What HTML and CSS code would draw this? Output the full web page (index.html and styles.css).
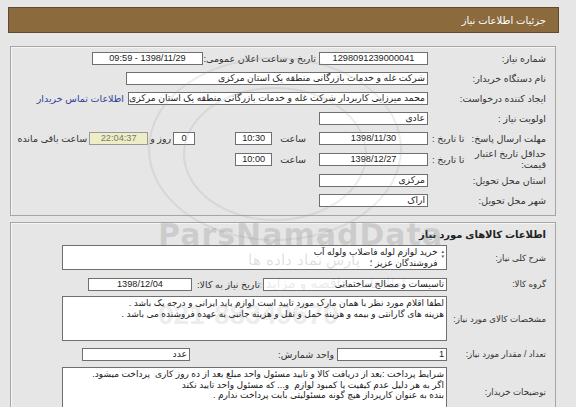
FILE: index.html
```html
<!DOCTYPE html>
<html lang="fa">
<head>
<meta charset="utf-8">
<title>جزئیات اطلاعات نیاز</title>
<link rel="stylesheet" href="styles.css">
</head>
<body>
<div class="page" dir="rtl">
  <div class="header">جزئیات اطلاعات نیاز</div>

  <div class="panel p1">
    <div class="row">
      <div class="lbl">شماره نیاز:</div>
      <div class="box w109 c">1298091239000041</div>
      <div class="lbl2 w113">تاریخ و ساعت اعلان عمومی:</div>
      <div class="box w111 c">1398/11/29 - 09:59</div>
    </div>
    <div class="row">
      <div class="lbl">نام دستگاه خریدار:</div>
      <div class="box w302">شرکت غله و خدمات بازرگانی منطقه یک استان مرکزی</div>
    </div>
    <div class="row">
      <div class="lbl">ایجاد کننده درخواست:</div>
      <div class="box w300">محمد میرزایی کاربردار شرکت غله و خدمات بازرگانی منطقه یک استان مرکزی</div>
      <a class="link" href="#">اطلاعات تماس خریدار</a>
    </div>
    <div class="row">
      <div class="lbl">اولویت نیاز :</div>
      <div class="box w109">عادی</div>
    </div>
    <div class="row">
      <div class="lbl split"><span>مهلت ارسال پاسخ:</span><span class="ta">تا تاریخ :</span></div>
      <div class="box w109 c">1398/11/30</div>
      <div class="saat">ساعت</div>
      <div class="box w37 c">10:30</div>
      <div class="box w22 c gap40">0</div>
      <div class="txt">روز و</div>
      <div class="box timer c">22:04:37</div>
      <div class="txt">ساعت باقی مانده</div>
    </div>
    <div class="row tall">
      <div class="lbl split"><span class="two">حداقل تاریخ اعتبار<br>قیمت:</span><span class="ta">تا تاریخ :</span></div>
      <div class="box w109 c">1398/12/27</div>
      <div class="saat">ساعت</div>
      <div class="box w37 c">10:00</div>
    </div>
    <div class="row">
      <div class="lbl">استان محل تحویل:</div>
      <div class="box w109">مرکزی</div>
    </div>
    <div class="row">
      <div class="lbl">شهر محل تحویل:</div>
      <div class="box w109">اراک</div>
    </div>
  </div>

  <div class="panel p2">
    <div class="title">اطلاعات کالاهای مورد نیاز</div>
    <div class="row2 r-sharh">
      <div class="lbl">شرح کلی نیاز:</div>
      <div class="area h25">
        <span class="spin">&#9652;<br>&#9662;</span>
        <div>خرید لوازم لوله فاضلاب ولوله آب<br>فروشندگان عزیز ؛</div>
      </div>
    </div>
    <div class="row2 r-goroh">
      <div class="lbl">گروه کالا:</div>
      <div class="box w184">تاسیسات و مصالح ساختمانی</div>
      <div class="lbl2 w68">تاریخ نیاز به کالا:</div>
      <div class="box w104 c">1398/12/04</div>
    </div>
    <div class="row2 r-moshakh">
      <div class="lbl">مشخصات کالای مورد نیاز:</div>
      <div class="area h45">لطفا اقلام مورد نظر با همان مارک مورد تایید است لوازم باید ایرانی و درجه یک باشد .<br>هزینه های گارانتی و بیمه و هزینه حمل و نقل و هزینه جانبی به عهده فروشنده می باشد .</div>
    </div>
    <div class="row2 r-tedad">
      <div class="lbl">تعداد / مقدار مورد نیاز:</div>
      <div class="box w110">1</div>
      <div class="lbl2 w144">واحد شمارش:</div>
      <div class="box w108">عدد</div>
    </div>
    <div class="row2 r-tozih">
      <div class="lbl">توضیحات خریدار:</div>
      <div class="area h60">شرایط پرداخت :بعد از دریافت کالا و تایید مسئول واحد مبلغ بعد از ده روز کاری&nbsp; پرداخت میشود.<br>اگر به هر دلیل عدم کیفیت یا کمبود لوازم&nbsp; و... که مسئول واحد تایید نکند<br>بنده به عنوان کارپرداز هیچ گونه مسئولیتی بابت پرداخت ندارم .</div>
    </div>
  </div>

  <div class="wm" aria-hidden="true">
    <div class="wm-circle c1"></div>
    <div class="wm-circle c2"></div>
    <div class="wm-en">ParsNamadData</div>
    <div class="wm-fa">پارس نماد داده ها</div>
    <div class="wm-fa2">اطلاعات مناقصه و مزایده</div>
    <div class="wm-num">021-88349670</div>
  </div>
</div>
</body>
</html>
```

FILE: styles.css
```css
html, body {
  margin: 0;
  padding: 0;
  background: #e6e6e6;
}

.page {
  position: relative;
  width: 551px;
  margin: 7px 0 0 8px;
  font-family: "Liberation Sans", "DejaVu Sans", sans-serif;
  font-size: 9.5px;
  color: #222;
  overflow: hidden;
  height: 400px;
}

.header {
  height: 26px;
  box-sizing: border-box;
  background: #8b6b3e;
  border: 1px solid #5e4a2c;
  color: #fff;
  display: flex;
  align-items: center;
  padding-right: 12px;
  font-size: 10px;
}

.panel {
  margin: 13px 3px 0 2px;
  border: 1px solid #a6a6a6;
  box-shadow: inset 1px 1px 0 #f4f4f4;
  background: #e6e6e6;
}

.p1 {
  height: 170px;
  box-sizing: border-box;
  padding: 1px 9px 0 0;
}

.p2 {
  margin-top: 6px;
  height: 200px;
  padding: 0 9px 0 0;
}

.row {
  display: flex;
  align-items: center;
  height: 20px;
}

.row.tall {
  height: 22px;
}

.lbl {
  width: 118px;
  flex: none;
  color: #333;
  white-space: nowrap;
}

.split {
  display: flex;
  align-items: center;
  justify-content: space-between;
  padding-left: 4px;
  box-sizing: border-box;
}

.two {
  line-height: 11px;
}

.ta {
  color: #333;
}

.lbl2 {
  flex: none;
  margin-right: 3px;
  color: #333;
  white-space: nowrap;
}

.box {
  flex: none;
  height: 13px;
  box-sizing: border-box;
  background: #fff;
  border: 1px solid #6f6f6f;
  line-height: 11px;
  padding: 0 2px;
  white-space: nowrap;
  overflow: hidden;
  color: #222;
  font-size: 9.2px;
}

.c { text-align: center; }

.w22 { width: 22px; }
.w37 { width: 37px; }
.w104 { width: 104px; }
.w108 { width: 108px; }
.w109 { width: 109px; }
.w110 { width: 110px; }
.w111 { width: 111px; }
.w113 { width: 113px; }
.w184 { width: 184px; }
.w300 { width: 300px; }
.w302 { width: 302px; }
.w68 { width: 68px; }
.w144 { width: 144px; }

.saat {
  flex: none;
  margin-right: 13px;
  margin-left: 8px;
  color: #333;
}

.gap40 { margin-right: 40px; }

.txt {
  flex: none;
  margin: 0 2px;
  color: #333;
}

.timer {
  width: 59px;
  background: #eeeec6;
  color: #777;
  border-color: #999;
}

.link {
  margin-right: 4px;
  color: #2f3f9a;
  text-decoration: none;
  white-space: nowrap;
}

.title {
  font-weight: bold;
  font-size: 10px;
  color: #222;
  height: 20px;
  display: flex;
  align-items: center;
  padding-top: 1px;
}

.row2 {
  display: flex;
  align-items: center;
}

.row2 .lbl {
  width: 99px;
  font-size: 8.6px;
}

.r-sharh { height: 27px; }
.r-goroh { height: 22px; margin-top: 2px; }
.r-moshakh { height: 47px; }
.r-tedad { height: 24px; }
.r-tozih { height: 70px; align-items: flex-start; margin-top: 1px; }
.r-tozih .lbl { padding-top: 20px; }

.area {
  width: 385px;
  box-sizing: border-box;
  background: #fff;
  border: 1px solid #6f6f6f;
  padding: 1px 2px;
  line-height: 10.5px;
  font-size: 9px;
  color: #222;
  position: relative;
  white-space: nowrap;
  overflow: hidden;
}

.h25 { height: 25px; display: flex; gap: 4px; }
.h45 { height: 45px; }
.h60 { height: 60px; }

.spin {
  font-size: 5px;
  line-height: 5px;
  color: #555;
  padding-top: 2px;
}

.wm {
  position: absolute;
  inset: 0;
  pointer-events: none;
}

.wm-circle {
  position: absolute;
  border: 2px solid rgba(150, 150, 150, 0.18);
  border-radius: 50%;
}

.c1 { left: 140px; top: 50px; width: 250px; height: 180px; }
.c2 { left: 175px; top: 80px; width: 180px; height: 130px; }

.wm-en {
  position: absolute;
  left: 150px;
  top: 210px;
  font-family: "DejaVu Sans", sans-serif;
  font-weight: bold;
  font-size: 30px;
  color: rgba(140, 140, 140, 0.28);
  letter-spacing: 1px;
}

.wm-fa {
  position: absolute;
  left: 240px;
  top: 244px;
  font-family: "DejaVu Serif", serif;
  font-size: 15px;
  color: rgba(140, 140, 140, 0.28);
}

.wm-fa2 {
  position: absolute;
  left: 250px;
  top: 268px;
  font-size: 14px;
  color: rgba(140, 140, 140, 0.2);
}

.wm-num {
  position: absolute;
  left: 150px;
  top: 292px;
  font-size: 28px;
  font-weight: bold;
  color: rgba(140, 140, 140, 0.18);
}
```
